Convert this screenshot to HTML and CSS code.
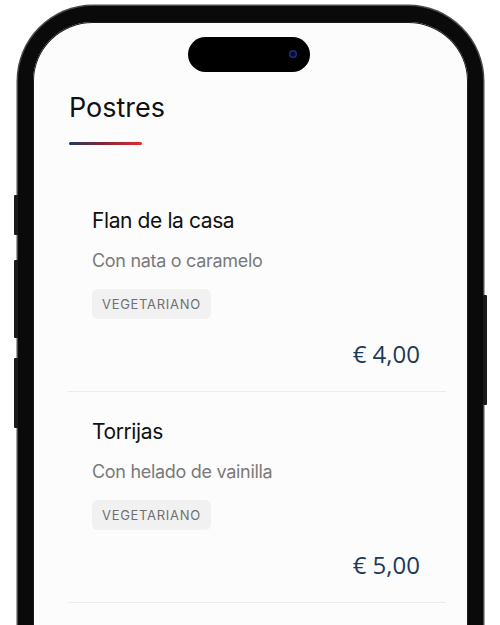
FILE: index.html
```html
<!doctype html>
<html>
<head>
  <meta charset="UTF-8">
  <title>Postres</title>
  <link rel="stylesheet" href="styles.css">
</head>
<body>
  <div class="phone">
    <span class="btn btn-a"></span>
    <span class="btn btn-b"></span>
    <span class="btn btn-c"></span>
    <span class="btn btn-r"></span>
    <div class="island"><span class="cam"></span></div>
    <div class="screen">
      <div class="head">
        <h1>Postres</h1>
        <div class="bar"></div>
      </div>
      <ul class="menu">
        <li class="item">
          <h2>Flan de la casa</h2>
          <p class="desc">Con nata o caramelo</p>
          <span class="tag">VEGETARIANO</span>
          <div class="price">€ 4,00</div>
        </li>
        <li class="item">
          <h2>Torrijas</h2>
          <p class="desc">Con helado de vainilla</p>
          <span class="tag">VEGETARIANO</span>
          <div class="price">€ 5,00</div>
        </li>
      </ul>
    </div>
  </div>
</body>
</html>
```

FILE: styles.css
```css
*{margin:0;
  padding:0;
  list-style:none;
  box-sizing:border-box;}
html,body{height:625px; overflow:hidden; background:#fff;}
body{font-family:Inter,"Liberation Sans",sans-serif;}

.phone{position:relative;
       width:465px;
       height:720px;
       margin:6px 0 0 18px;
       border:15px solid #0a0a0a;
       border-top-width:16px;
       border-radius:75px;
       background:#fcfcfc;
       box-shadow:0 0 0 1.5px #4a4a4a, inset 0 0 0 1px #1c1c1c;}
.btn{position:absolute; width:4px; background:#1a1a1a; border-radius:1px;}
.btn-a{left:-19px; top:173px; height:40px;}
.btn-b{left:-19px; top:238px; height:78px;}
.btn-c{left:-19px; top:336px; height:70px;}
.btn-r{right:-19px; top:273px; height:110px;}

.island{position:absolute;
        top:15px; left:155px;
        width:122px; height:35px;
        border-radius:18px;
        background:#000;}
.island .cam{position:absolute;
             left:101px; top:13px;
             width:8px; height:8px;
             border-radius:50%;
             background:#0a0f2e;
             box-shadow:inset 0 0 0 1.5px #1a2f7a;}

.screen{padding:69px 22px 0 35px;}
.head{padding-left:1px;}
.head h1{font-size:27px;
         line-height:34px;
         font-weight:400;
         color:#111;}
.head .bar{width:73px; height:3px;
           margin-top:17px;
           border-radius:2px;
           background:linear-gradient(90deg,#1d3a5c,#8a2636 50%,#e52b2b);}

.menu{margin-top:36px;}
.item{display:flex;
      flex-direction:column;
      align-items:flex-start;
      padding:27px 26px 22px 24px;
      border-bottom:1px solid #ececec;}
.item h2{font-size:21px;
         line-height:26px;
         font-weight:400;
         letter-spacing:-0.4px;
         color:#111;}
.item .desc{margin-top:15px;
            font-size:18px;
            line-height:24px;
            letter-spacing:-0.3px;
            color:#7a7a7a;}
.item .tag{margin-top:16px;
           height:30px;
           padding:0 10px;
           border-radius:6px;
           background:#f1f1f1;
           font-size:13px;
           line-height:30px;
           letter-spacing:0.7px;
           color:#707070;}
.item .price{align-self:flex-end;
             margin-top:19px;
             font-family:"Open Sans","Liberation Sans",sans-serif;
             font-size:24px;
             line-height:31px;
             color:#1c3a55;}
```
